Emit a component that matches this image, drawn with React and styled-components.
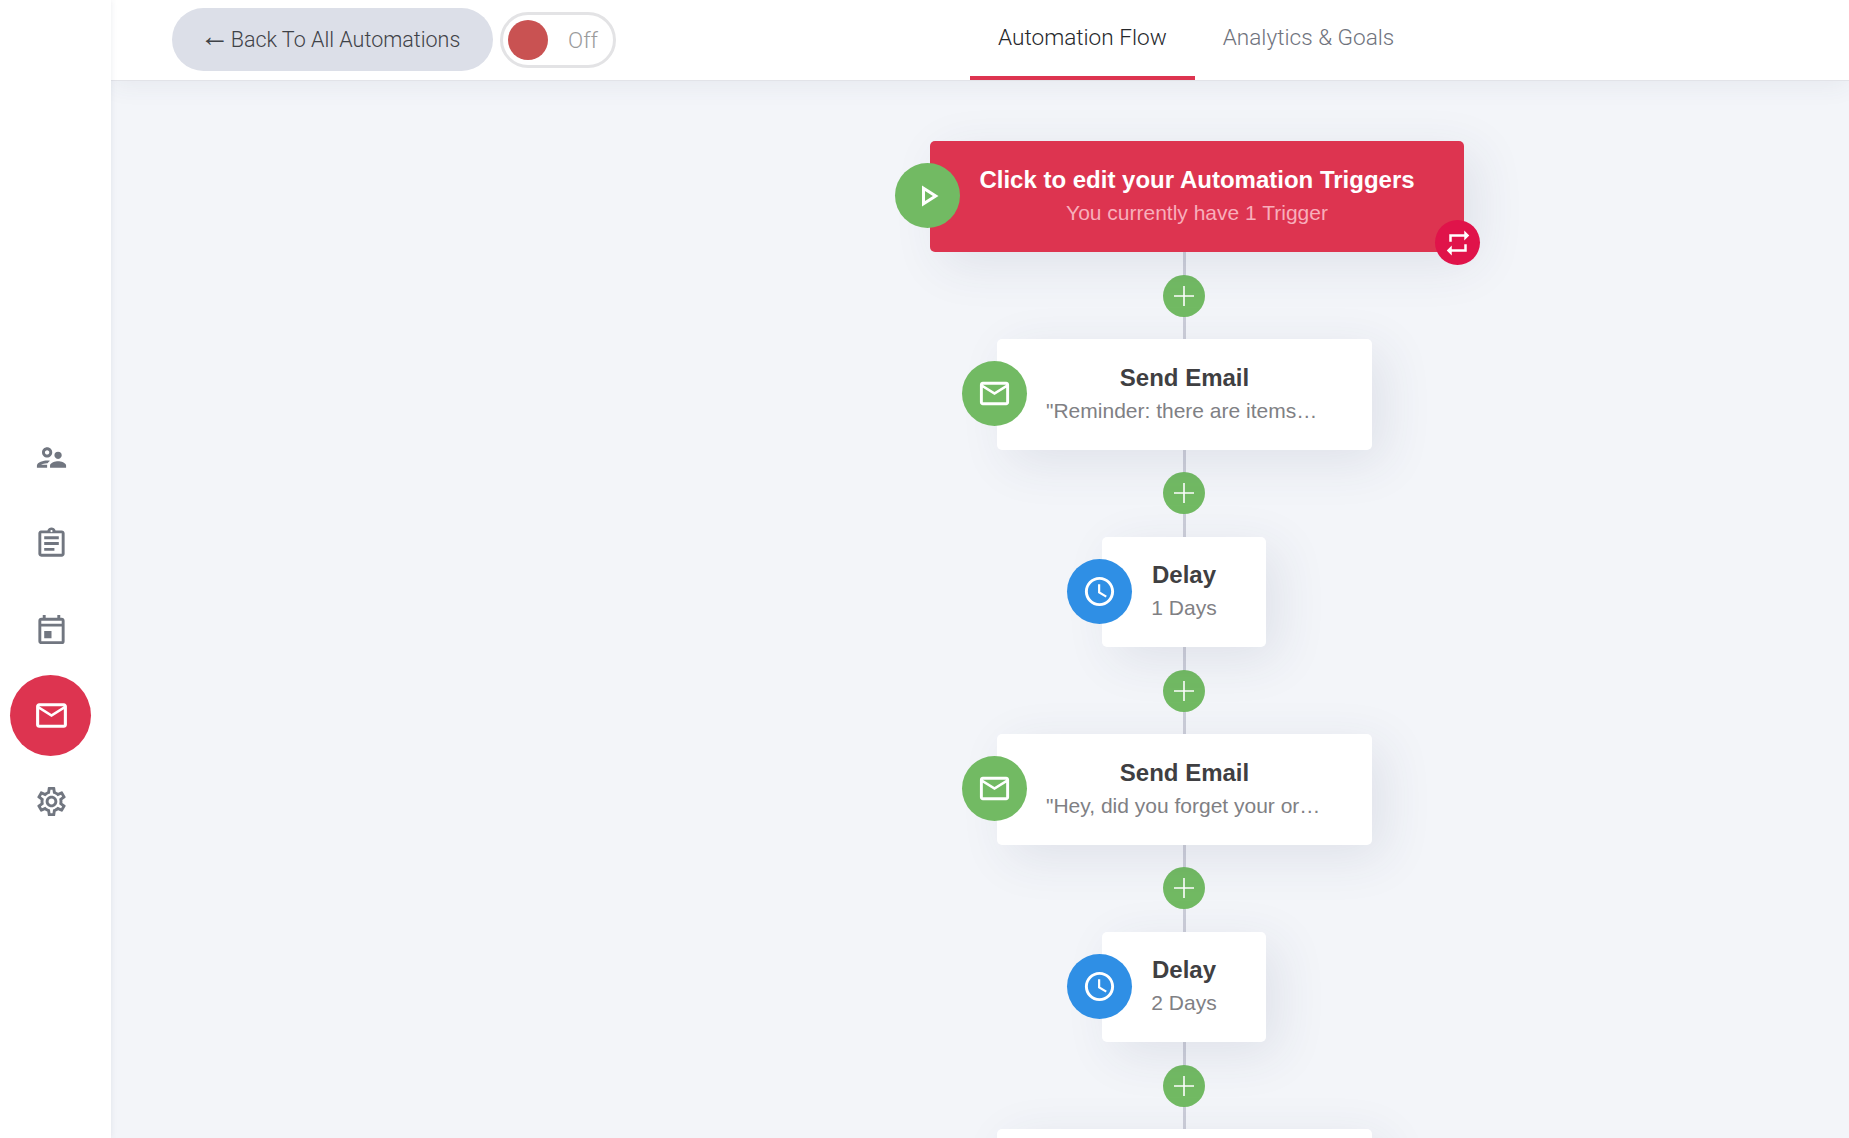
import React from "react";
import styled, { createGlobalStyle } from "styled-components";
import {
  MdOutlineSupervisorAccount,
  MdOutlineAssignment,
  MdOutlineEvent,
  MdMailOutline,
  MdOutlineSettings,
  MdOutlinePlayArrow,
  MdRepeat,
  MdAccessTime,
} from "react-icons/md";

const Global = createGlobalStyle`
  html, body { margin: 0; padding: 0; height: 100%; overflow: hidden; background: #f3f5f9; }
  #root { height: 100%; }
  * { box-sizing: border-box; }
`;

const Page = styled.div`
  display: flex;
  width: 1849px;
  height: 1138px;
  overflow: hidden;
  background: #f3f5f9;
`;

const Sidebar = styled.nav`
  width: 111px;
  flex: none;
  background: #fff;
  display: flex;
  flex-direction: column;
  align-items: center;
  padding-top: 417px;
  padding-right: 10px;
  position: relative;
  z-index: 3;
  box-shadow: 0 0 6px rgba(60, 70, 100, 0.1);
`;

const NavItem = styled.div`
  width: 81px;
  height: 81px;
  margin-bottom: 5px;
  padding-left: 2px;
  border-radius: 50%;
  display: flex;
  align-items: center;
  justify-content: center;
  color: ${(p) => (p.$active ? "#fff" : "#717680")};
  background: ${(p) => (p.$active ? "#dd3450" : "transparent")};
`;

const MirroredIcon = styled.span`
  display: flex;
  transform: scaleX(-1);
`;

const Main = styled.div`
  flex: 1;
  min-width: 0;
  display: flex;
  flex-direction: column;
`;

const Header = styled.header`
  height: 81px;
  flex: none;
  background: #fff;
  border-bottom: 1px solid #e2e3e8;
  display: flex;
  align-items: flex-start;
  padding-left: 61px;
  position: relative;
  z-index: 2;
  box-shadow: 0 4px 24px rgba(60, 70, 100, 0.07);
`;

const BackButton = styled.button`
  width: 321px;
  height: 63px;
  margin-top: 8px;
  padding: 0 5px 0 0;
  border: 0;
  border-radius: 32px;
  background: #dcdfe8;
  color: #3f4247;
  font: 300 21.5px "Roboto", sans-serif;
  display: flex;
  align-items: center;
  justify-content: center;
`;

const Arrow = styled.span`
  font-family: "Liberation Sans", Arial, sans-serif;
  font-size: 30px;
  line-height: 1;
  margin: 0 1px 7px 0;
`;

const Toggle = styled.div`
  width: 116px;
  height: 56px;
  margin: 12px 0 0 7px;
  border: 3px solid #e3e3e5;
  border-radius: 28px;
  background: #fff;
  display: flex;
  align-items: center;
  padding-left: 5px;
`;

const Knob = styled.span`
  width: 40px;
  height: 40px;
  border-radius: 50%;
  background: #c95252;
  flex: none;
`;

const ToggleLabel = styled.span`
  margin-left: 20px;
  color: #9b9b9b;
  font: 300 22.4px "Roboto", sans-serif;
`;

const Tabs = styled.div`
  display: flex;
  margin-left: 354px;
  height: 80px;
`;

const Tab = styled.div`
  padding: 0 28px 2px;
  height: 80px;
  display: flex;
  align-items: center;
  font: 300 22.6px "Roboto", sans-serif;
  color: ${(p) => (p.$active ? "#26282c" : "#6f737d")};
  border-bottom: 4px solid ${(p) => (p.$active ? "#dd3450" : "transparent")};
`;

const Canvas = styled.main`
  flex: 1;
  min-height: 0;
  overflow: hidden;
  display: flex;
  flex-direction: column;
  align-items: center;
  padding: 60px 0 0 409px;
`;

const Node = styled.div`
  position: relative;
  flex: none;
  width: ${(p) => p.$width}px;
  height: ${(p) => p.$height || 110.5}px;
  margin-left: ${(p) => p.$shift || 0}px;
  margin-right: ${(p) => p.$nudge || 0}px;
  border-radius: 5px;
  background: ${(p) => (p.$trigger ? "#dd3450" : "#fff")};
  box-shadow: 12px 12px 50px rgba(50, 60, 100, 0.1);
  display: flex;
  flex-direction: column;
  align-items: center;
  justify-content: center;
  text-align: center;
  font-family: "Liberation Sans", Arial, sans-serif;
  z-index: 1;
`;

const Circle = styled.span`
  position: absolute;
  left: -35px;
  top: 22px;
  width: 65px;
  height: 65px;
  border-radius: 50%;
  display: flex;
  align-items: center;
  justify-content: center;
  color: #fff;
  background: ${(p) => p.$color};
`;

const Badge = styled.span`
  position: absolute;
  right: -16px;
  bottom: -13px;
  width: 45px;
  height: 45px;
  border-radius: 50%;
  background: #e0134a;
  color: #fff;
  display: flex;
  align-items: center;
  justify-content: center;
`;

const Title = styled.div`
  font-weight: 700;
  font-size: 24px;
  line-height: 30px;
  color: ${(p) => (p.$trigger ? "#fff" : "#3f3f42")};
`;

const Sub = styled.div`
  margin-top: 3px;
  font-size: 21px;
  line-height: 30px;
  max-width: ${(p) => (p.$trigger ? "none" : "277px")};
  white-space: nowrap;
  overflow: hidden;
  text-overflow: ellipsis;
  color: ${(p) => (p.$trigger ? "#f8aebb" : "#808084")};
`;

const Connector = styled.div`
  flex: none;
  height: 87px;
  width: 42px;
  margin-right: 1px;
  display: flex;
  align-items: center;
  justify-content: center;
  position: relative;
  &::before {
    content: "";
    position: absolute;
    top: 0;
    bottom: 0;
    left: 20px;
    width: 3px;
    background: #cbcdd8;
  }
`;

const AddButton = styled.span`
  position: relative;
  width: 42px;
  height: 42px;
  border-radius: 50%;
  background: #72ba63;
  display: flex;
  align-items: center;
  justify-content: center;
`;

const Plus = () => (
  <svg width="22" height="22" viewBox="0 0 22 22" fill="none" stroke="#fff" strokeWidth="1.6">
    <path d="M11 1v20M1 11h20" />
  </svg>
);

const flow = [
  { kind: "email", title: "Send Email", sub: "\"Reminder: there are items in your cart\"" },
  { kind: "delay", title: "Delay", sub: "1 Days" },
  { kind: "email", title: "Send Email", sub: "\"Hey, did you forget your order?\"" },
  { kind: "delay", title: "Delay", sub: "2 Days" },
  { kind: "email" },
];

const Link = () => (
  <Connector>
    <AddButton>
      <Plus />
    </AddButton>
  </Connector>
);

export default function App() {
  return (
    <Page>
      <Global />
      <Sidebar>
        <NavItem><MdOutlineSupervisorAccount size={35} /></NavItem>
        <NavItem><MdOutlineAssignment size={35} /></NavItem>
        <NavItem><MirroredIcon><MdOutlineEvent size={35} /></MirroredIcon></NavItem>
        <NavItem $active><MdMailOutline size={37} /></NavItem>
        <NavItem><MdOutlineSettings size={35} /></NavItem>
      </Sidebar>
      <Main>
        <Header>
          <BackButton><Arrow>←</Arrow>Back To All Automations</BackButton>
          <Toggle>
            <Knob />
            <ToggleLabel>Off</ToggleLabel>
          </Toggle>
          <Tabs>
            <Tab $active>Automation Flow</Tab>
            <Tab>Analytics &amp; Goals</Tab>
          </Tabs>
        </Header>
        <Canvas>
          <Node $trigger $width={534} $height={111} $shift={25}>
            <Circle $color="#72ba63"><MdOutlinePlayArrow size={36} /></Circle>
            <Title $trigger>Click to edit your Automation Triggers</Title>
            <Sub $trigger>You currently have 1 Trigger</Sub>
            <Badge><MdRepeat size={30} /></Badge>
          </Node>
          {flow.map((step, i) => (
            <React.Fragment key={i}>
              <Link />
              <Node $width={step.kind === "email" ? 375 : 164} $nudge={step.kind === "email" ? 0 : 1}>
                <Circle $color={step.kind === "email" ? "#72ba63" : "#2f8fe5"}>
                  {step.kind === "email" ? <MdMailOutline size={35} /> : <MdAccessTime size={35} />}
                </Circle>
                {step.title && <Title>{step.title}</Title>}
                {step.sub && <Sub>{step.sub}</Sub>}
              </Node>
            </React.Fragment>
          ))}
        </Canvas>
      </Main>
    </Page>
  );
}
